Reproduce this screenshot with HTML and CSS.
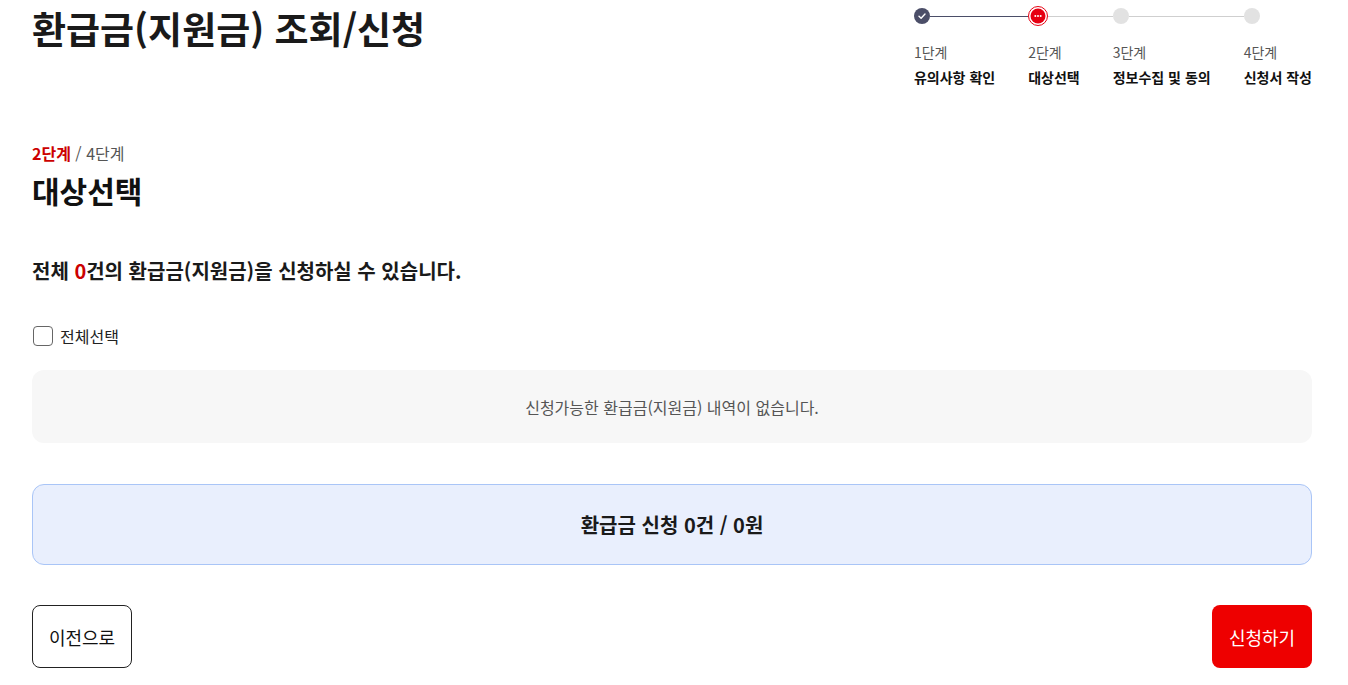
FILE: index.html
```html
<!DOCTYPE html>
<html lang="ko">
<head>
<meta charset="utf-8">
<title>환급금(지원금) 조회/신청</title>
<link rel="stylesheet" href="styles.css">
</head>
<body>
<div class="page">
  <header class="head">
    <h1 class="title">환급금(지원금) 조회/신청</h1>
    <ol class="stepper">
      <li class="step done">
        <div class="track">
          <span class="dot"><svg width="16" height="16" viewBox="0 0 16 16"><path d="M5 8.2 L7.1 10.2 L11 6" fill="none" stroke="#fff" stroke-width="1.4" stroke-linecap="round" stroke-linejoin="round"/></svg></span>
          <span class="line"></span>
        </div>
        <span class="num">1단계</span>
        <span class="name">유의사항 확인</span>
      </li>
      <li class="step current">
        <div class="track">
          <span class="dot"><svg width="20" height="20" viewBox="0 0 20 20"><circle cx="10" cy="10" r="9.5" fill="none" stroke="#e60012" stroke-width="1"/><circle cx="10" cy="10" r="7.5" fill="#e60012"/><circle cx="7.3" cy="10" r="1" fill="#fff"/><circle cx="10" cy="10" r="1" fill="#fff"/><circle cx="12.7" cy="10" r="1" fill="#fff"/></svg></span>
          <span class="line"></span>
        </div>
        <span class="num">2단계</span>
        <span class="name">대상선택</span>
      </li>
      <li class="step">
        <div class="track">
          <span class="dot"></span>
          <span class="line"></span>
        </div>
        <span class="num">3단계</span>
        <span class="name">정보수집 및 동의</span>
      </li>
      <li class="step last">
        <div class="track">
          <span class="dot"></span>
        </div>
        <span class="num">4단계</span>
        <span class="name">신청서 작성</span>
      </li>
    </ol>
  </header>

  <section class="content">
    <p class="progress"><strong>2단계</strong> / 4단계</p>
    <h2 class="section-title">대상선택</h2>
    <p class="summary">전체 <em>0</em>건의 환급금(지원금)을 신청하실 수 있습니다.</p>

    <label class="check-all">
      <span class="box"></span>
      <span>전체선택</span>
    </label>

    <div class="empty">신청가능한 환급금(지원금) 내역이 없습니다.</div>

    <div class="total">환급금 신청 0건 / 0원</div>

    <div class="actions">
      <button class="btn prev" type="button">이전으로</button>
      <button class="btn apply" type="button">신청하기</button>
    </div>
  </section>
</div>
</body>
</html>
```

FILE: styles.css
```css
* { box-sizing: border-box; }
html, body { margin: 0; padding: 0; background: #fff; }
body {
  font-family: "Noto Sans CJK KR", "Noto Sans", sans-serif;
  color: #111;
}
.page {
  width: 1280px;
  margin: 0 0 0 32px;
}
.head {
  display: flex;
  justify-content: space-between;
  align-items: flex-start;
}
.title {
  margin: 2px 0 0;
  font-size: 37px;
  line-height: 52px;
  font-weight: 700;
  color: #1a1a1a;
}
.stepper {
  list-style: none;
  margin: 6px 0 0;
  padding: 0;
  display: flex;
}
.step {
  display: flex;
  flex-direction: column;
  padding-right: 33px;
}
.step.last { padding-right: 0; }
.track {
  display: flex;
  align-items: center;
  height: 20px;
  margin-right: -33px;
}
.step.last .track { margin-right: 0; }
.dot {
  width: 16px;
  height: 16px;
  border-radius: 50%;
  background: #e2e2e2;
  flex: none;
  display: flex;
}
.done .dot { background: #4b4e68; }
.current .dot { width: 20px; height: 20px; background: none; }
.line {
  flex: 1;
  height: 1px;
  background: #cfcfcf;
}
.done .line { background: #4b4e68; }
.num {
  margin-top: 16px;
  font-size: 14px;
  line-height: 20px;
  color: #555;
}
.name {
  margin-top: 5px;
  font-size: 14px;
  line-height: 20px;
  font-weight: 700;
  color: #111;
  white-space: nowrap;
}
.content { margin-top: 55px; }
.progress {
  margin: 0;
  font-size: 16px;
  line-height: 22px;
  color: #555;
}
.progress strong { color: #cc0000; font-weight: 700; }
.section-title {
  margin: 6px 0 0;
  font-size: 30px;
  line-height: 40px;
  font-weight: 700;
  color: #111;
}
.summary {
  margin: 47px 0 0;
  font-size: 20px;
  line-height: 28px;
  font-weight: 700;
  color: #1a1a1a;
}
.summary em { font-style: normal; color: #cc0000; }
.check-all {
  margin-top: 40px;
  display: flex;
  align-items: center;
  gap: 7px;
  font-size: 16px;
  line-height: 22px;
  color: #222;
}
.box {
  width: 20px;
  height: 20px;
  border: 1px solid #666;
  border-radius: 4px;
  margin-left: 1px;
  background: #fff;
}
.empty {
  margin-top: 23px;
  height: 73px;
  border-radius: 12px;
  background: #f7f7f7;
  display: flex;
  align-items: center;
  justify-content: center;
  font-size: 16px;
  color: #555;
}
.total {
  margin-top: 41px;
  height: 81px;
  border: 1px solid #a9c5f7;
  border-radius: 12px;
  background: #e9effd;
  display: flex;
  align-items: center;
  justify-content: center;
  font-size: 20px;
  font-weight: 700;
  color: #1a1a1a;
}
.actions {
  margin-top: 40px;
  display: flex;
  justify-content: space-between;
}
.btn {
  width: 100px;
  height: 63px;
  border-radius: 8px;
  font-family: inherit;
  font-size: 18px;
  cursor: pointer;
}
.prev {
  background: #fff;
  border: 1px solid #222;
  color: #111;
}
.apply {
  background: #ee0000;
  border: 0;
  color: #fff;
}
```
